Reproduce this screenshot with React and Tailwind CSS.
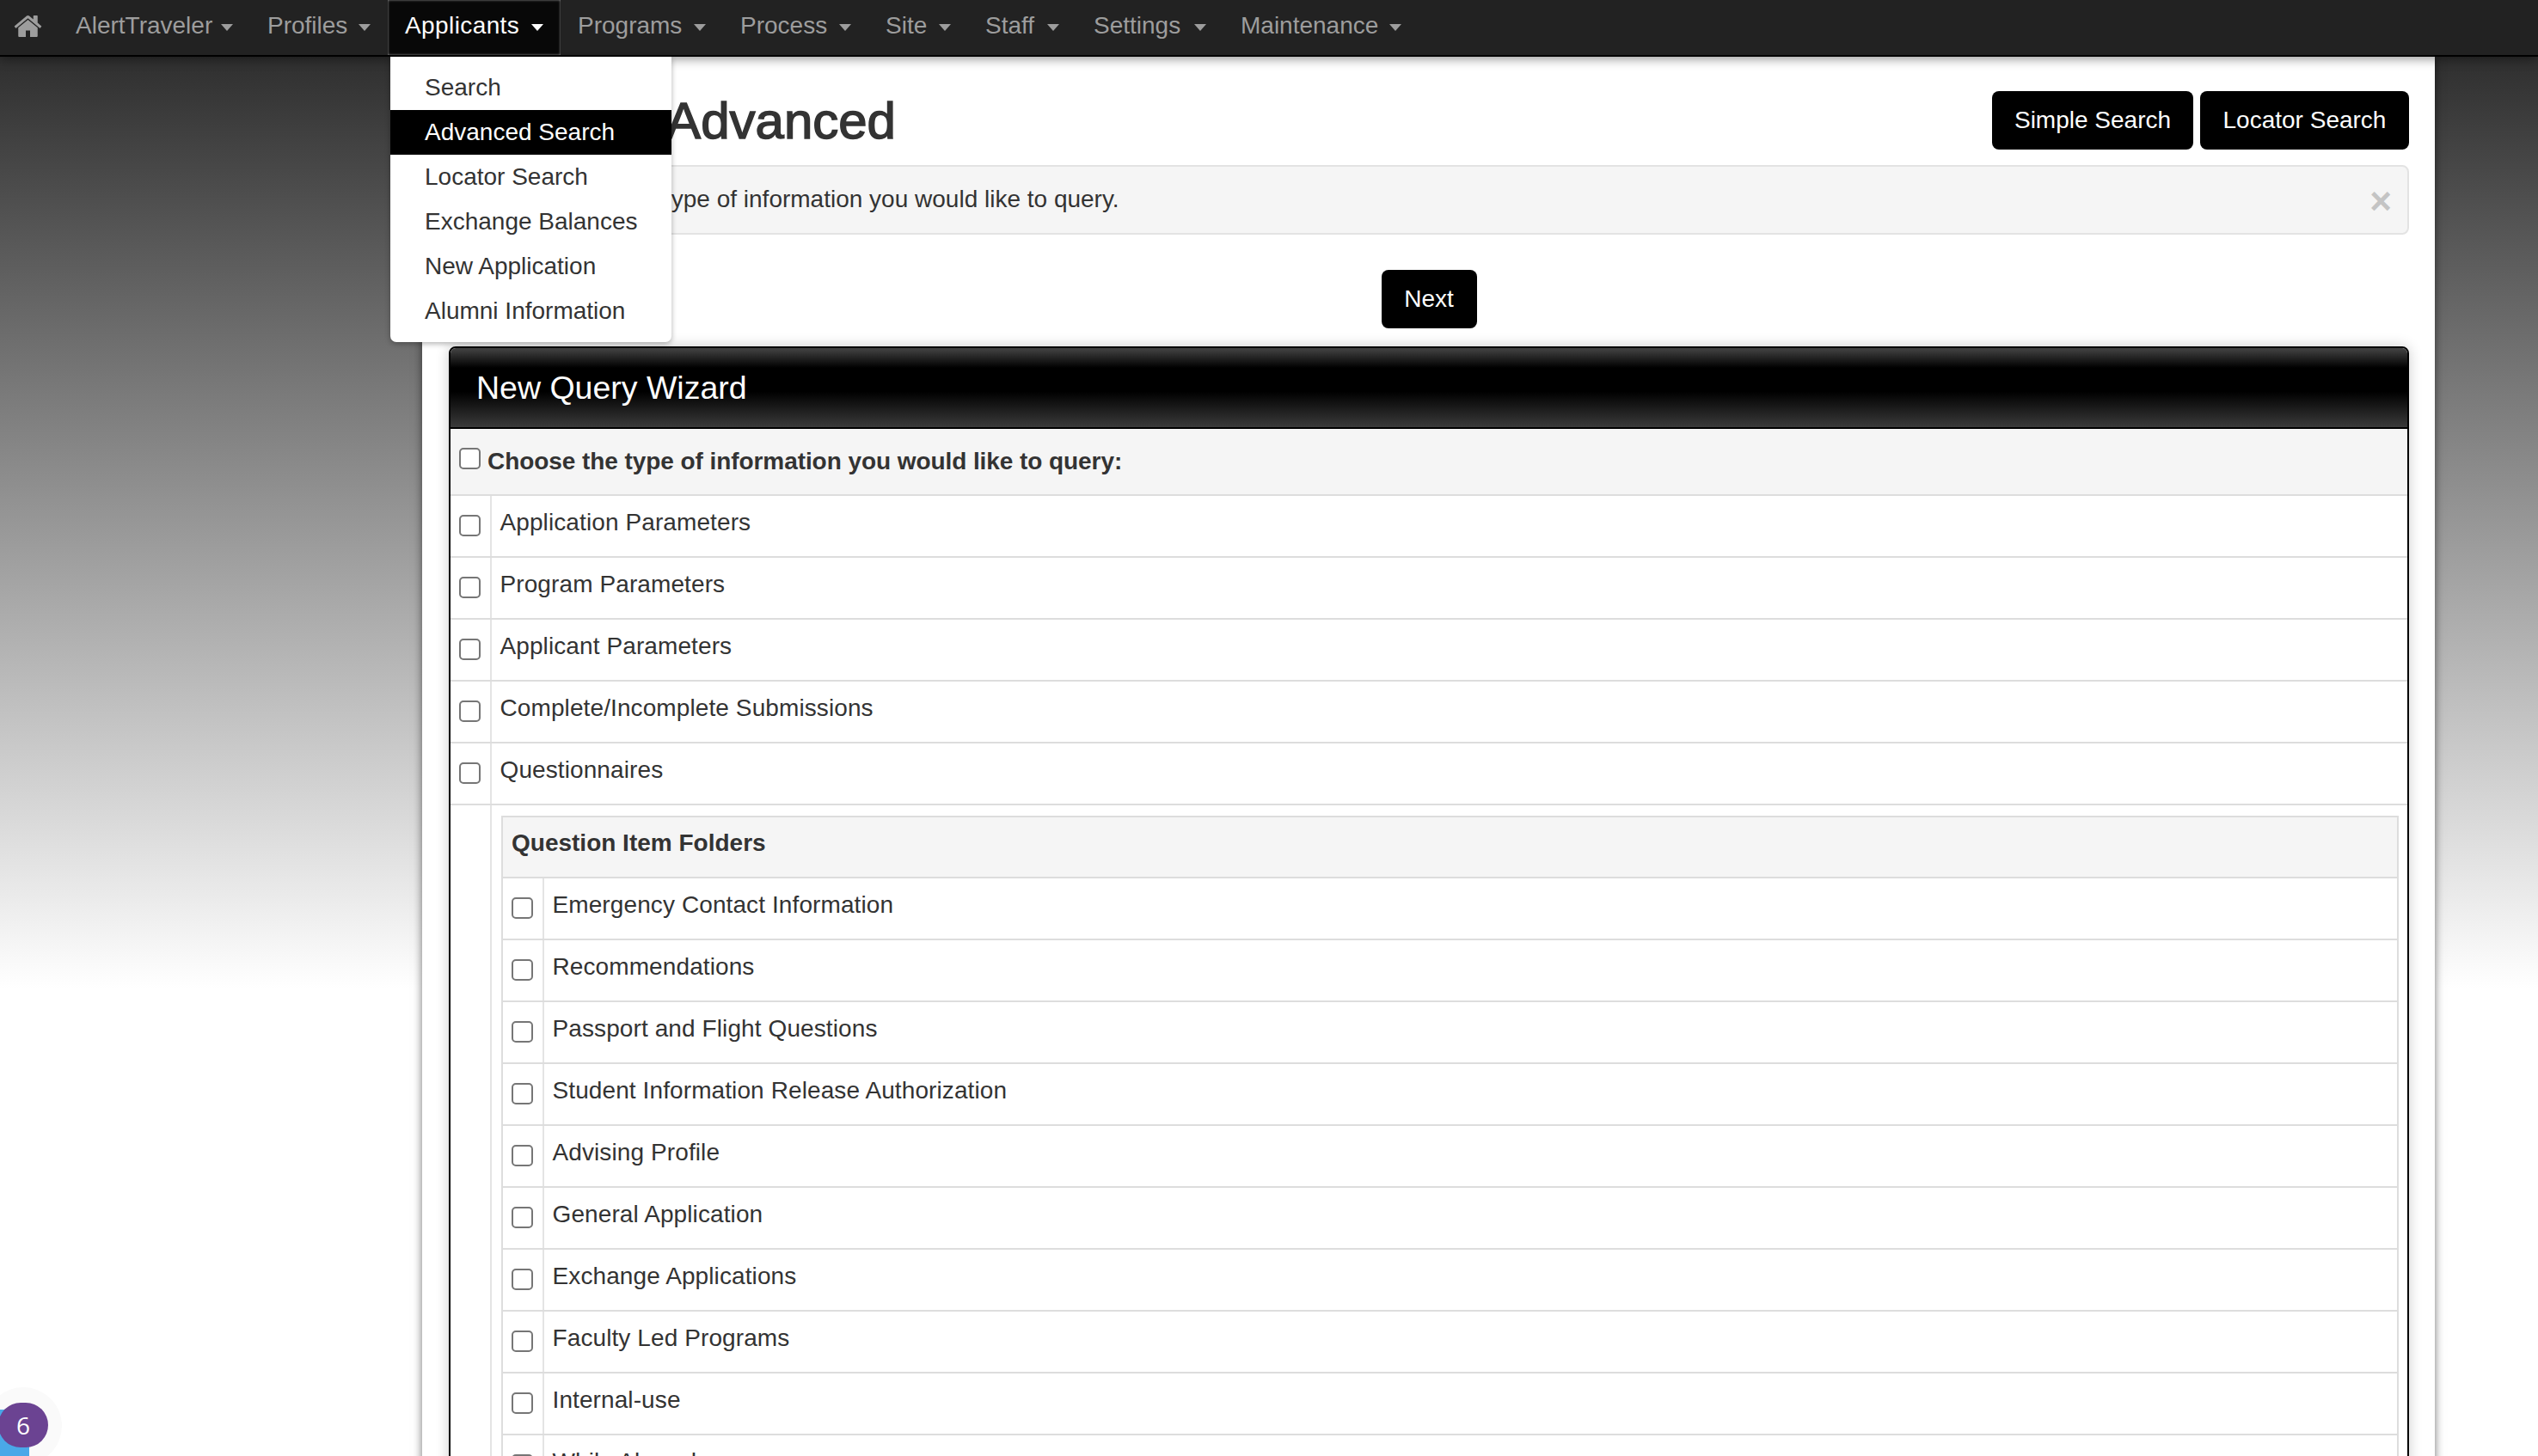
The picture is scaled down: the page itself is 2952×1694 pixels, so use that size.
const NAV_ITEMS = [
  { label: 'AlertTraveler', width: 'w-[223px]' },
  { label: 'Profiles', width: 'w-[160px]' },
  { label: 'Applicants', width: 'w-[201px]', tracking: 'tracking-[0.4px]' },
  { label: 'Programs', width: 'w-[189px]' },
  { label: 'Process', width: 'w-[169px]' },
  { label: 'Site', width: 'w-[116px]' },
  { label: 'Staff', width: 'w-[126px]' },
  { label: 'Settings', width: 'w-[171px]' },
  { label: 'Maintenance', width: 'w-[227px]' },
];
const MENU_ITEMS = ['Search', 'Advanced Search', 'Locator Search', 'Exchange Balances', 'New Application', 'Alumni Information'];
const TOP_ROWS = ['Application Parameters', 'Program Parameters', 'Applicant Parameters', 'Complete/Incomplete Submissions', 'Questionnaires'];
const FOLDERS = [
  'Emergency Contact Information',
  'Recommendations',
  'Passport and Flight Questions',
  'Student Information Release Authorization',
  'Advising Profile',
  'General Application',
  'Exchange Applications',
  'Faculty Led Programs',
  'Internal-use',
  'While Abroad',
];

function HomeIcon() {
  return (
    <svg viewBox="0 0 1792 1792" className="w-[35px] h-[35px] -mt-[3px] fill-[#9d9d9d]">
      <path d="M1472 992v480q0 26-19 45t-45 19h-384v-384h-256v384h-384q-26 0-45-19t-19-45v-480q0-1 .5-3t.5-3l575-474 575 474q1 2 1 6zm223-69l-62 74q-8 9-21 11h-3q-13 0-21-7l-692-577-692 577q-12 8-24 7-13-2-21-11l-62-74q-8-10-7-23.5t11-21.5l719-599q32-26 76-26t76 26l244 204v-195q0-14 9-23t23-9h192q14 0 23 9t9 23v408l219 182q10 8 11 21.5t-7 23.5z" />
    </svg>
  );
}

function Caret({ active }) {
  return (
    <span className={`w-0 h-0 border-x-[7px] border-x-transparent border-t-[8px] ${active ? 'border-t-white' : 'border-t-[#9d9d9d]'}`} />
  );
}

function Navbar() {
  return (
    <nav className="relative z-20 flex h-[66px] bg-[#222222] border-b-2 border-black shadow-[0_2px_12px_rgba(0,0,0,0.45)]">
      <div className="flex items-center w-[68px] pl-[15px]">
        <HomeIcon />
      </div>
      {NAV_ITEMS.map((item) => {
        const active = item.label === 'Applicants';
        return (
          <div
            key={item.label}
            className={`relative flex items-center justify-between px-[20px] ${item.width} ${active ? 'bg-[#080808] text-white shadow-[inset_0_0_3px_#999999]' : 'text-[#9d9d9d]'}`}
          >
            <span className={`-mt-[5px] ${item.tracking || ''}`}>{item.label}</span>
            <Caret active={active} />
            {active && <DropdownMenu />}
          </div>
        );
      })}
    </nav>
  );
}

function DropdownMenu() {
  return (
    <div className="absolute left-[3px] top-[66px] w-[327px] bg-white text-[#333333] py-[10px] rounded-b-[7px] shadow-[0_2px_6px_rgba(0,0,0,0.3)]">
      {MENU_ITEMS.map((item) => (
        <div key={item} className={`h-[52px] pl-[40px] flex items-center ${item === 'Advanced Search' ? 'bg-black text-white' : ''}`}>
          {item}
        </div>
      ))}
    </div>
  );
}

function CheckBox() {
  return <input type="checkbox" className="block appearance-none w-[25px] h-[25px] rounded-[5px] border-2 border-[#767676] bg-white" />;
}

function Row({ label }) {
  return (
    <div className="flex h-[72px] border-b-2 border-[#dddddd]">
      <div className="w-[48px] pl-[10px] pt-[22px] border-r-2 border-[#e4e4e4]">
        <CheckBox />
      </div>
      <div className="pl-[9.5px] pt-[11px] tracking-[0.1px]">{label}</div>
    </div>
  );
}

function FolderTable() {
  return (
    <div className="border-2 border-[#dddddd]">
      <div className="h-[71px] pl-[10px] pt-[10px] font-bold bg-[#f5f5f5] border-b-2 border-[#dddddd]">Question Item Folders</div>
      {FOLDERS.map((folder) => (
        <Row key={folder} label={folder} />
      ))}
    </div>
  );
}

function Wizard() {
  return (
    <div className="rounded-[8px] border-2 border-black bg-white shadow-[0_0_16px_rgba(0,0,0,0.2)]">
      <div className="h-[94px] pl-[30px] flex items-center text-[37.5px] text-white rounded-t-[6px] bg-[linear-gradient(#444444,#000000_25%,#000000_55%,#3a3a3a)] border-b-2 border-black">
        New Query Wizard
      </div>
      <div className="flex h-[78px] pl-[10px] pt-[22px] gap-[8px] font-bold tracking-[-0.07px] bg-[#f5f5f5] border-b-2 border-[#dddddd]">
        <CheckBox />
        <span className="-mt-[4px]">Choose the type of information you would like to query:</span>
      </div>
      {TOP_ROWS.map((row) => (
        <Row key={row} label={row} />
      ))}
      <div className="flex">
        <div className="w-[48px] border-r-2 border-[#e4e4e4] shrink-0" />
        <div className="flex-1 pl-[11px] pr-[10px] pt-[12px]">
          <FolderTable />
        </div>
      </div>
    </div>
  );
}

export default function App() {
  return (
    <div className="relative h-[1694px] overflow-hidden bg-[linear-gradient(#222222,#ffffff_1150px)] text-[28px] leading-[40px] text-[#333333] font-['Liberation_Sans',Arial,sans-serif]">
      <Navbar />
      <main className="ml-[491px] w-[2341px] h-[1640px] pl-[31px] pr-[30px] pt-[40px] bg-white shadow-[0_0_10px_rgba(0,0,0,0.55)]">
        <div className="flex items-center justify-between h-[68px]">
          <h1 className="pl-[13px] pt-[2px] text-[60px] leading-[68px] text-[#333333] [-webkit-text-stroke:1.5px_#333333]">Search - Advanced</h1>
          <div className="flex gap-[8px]">
            <button className="h-[68px] w-[234px] rounded-[8px] bg-black text-white">Simple Search</button>
            <button className="h-[68px] w-[243px] rounded-[8px] bg-black text-white">Locator Search</button>
          </div>
        </div>
        <div className="flex justify-between h-[81px] mt-[18px] pl-[98px] pr-[18px] pt-[18px] bg-[#f5f5f5] border-2 border-[#e3e3e3] rounded-[8px]">
          <span>Choose the type of information you would like to query.</span>
          <span className="text-[44px] font-bold text-[#c4c4c4] leading-[44px]">×</span>
        </div>
        <div className="flex justify-center mt-[41px]">
          <button className="h-[68px] w-[111px] rounded-[8px] bg-black text-white">Next</button>
        </div>
        <div className="mt-[21px]">
          <Wizard />
        </div>
      </main>
      <div className="absolute -left-[18px] top-[1614px] w-[90px] h-[90px] rounded-full bg-[#fafafa]" />
      <div className="absolute left-0 bottom-0 w-[34px] h-[54px] bg-[#4aa8e8]" />
      <div className="absolute -left-[2px] top-[1632px] w-[58px] h-[52px] rounded-full bg-[#6b4392] text-white flex items-center justify-center font-['Open_Sans',sans-serif]">
        6
      </div>
    </div>
  );
}
